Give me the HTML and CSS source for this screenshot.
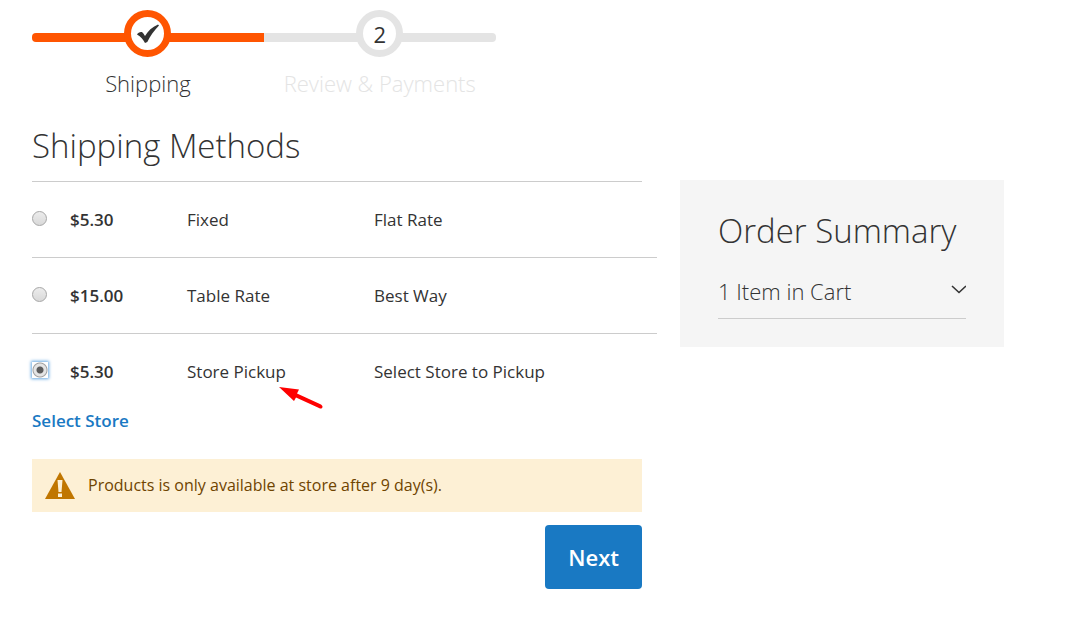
FILE: index.html
```html
<!DOCTYPE html>
<html lang="en">
<head>
    <meta charset="UTF-8">
    <meta name="viewport" content="width=device-width, initial-scale=1.0">
    <title>Checkout</title>
    <link rel="stylesheet" href="styles.css">
</head>
<body>
    <div class="checkout">
        <main class="opc-wrapper">
            <ol class="progress">
                <li class="step active">
                    <span class="step-icon">
                        <svg width="24" height="22" viewBox="0 0 24 22" aria-hidden="true">
                            <path d="M1 11.500 C2 9.500 5 8.500 6.500 9.500 C7.500 10.300 8 11.500 9 13 C12 8 16 4 22 1.500 L23 2.500 C18 7.500 14 13.500 11.300 19 L9 20 C7 16.500 5 13.500 1 11.500 Z"/>
                        </svg>
                    </span>
                    <span class="step-label">Shipping</span>
                </li>
                <li class="step">
                    <span class="step-icon">2</span>
                    <span class="step-label">Review &amp; Payments</span>
                </li>
            </ol>

            <h1 class="title">Shipping Methods</h1>

            <form class="methods-form">
                <table class="methods">
                    <tbody>
                        <tr>
                            <td class="col-radio"><input type="radio" name="method" id="method_flat" class="radio"></td>
                            <td class="col-price">$5.30</td>
                            <td class="col-method"><label for="method_flat">Fixed</label></td>
                            <td>Flat Rate</td>
                        </tr>
                        <tr>
                            <td class="col-radio"><input type="radio" name="method" id="method_table" class="radio"></td>
                            <td class="col-price">$15.00</td>
                            <td class="col-method"><label for="method_table">Table Rate</label></td>
                            <td>Best Way</td>
                        </tr>
                        <tr>
                            <td class="col-radio"><input type="radio" name="method" id="method_pickup" class="radio" checked></td>
                            <td class="col-price">$5.30</td>
                            <td class="col-method">
                                <label for="method_pickup" class="pointed">Store Pickup<svg class="arrow" width="46" height="26" viewBox="0 0 46 26" aria-hidden="true">
                                    <path d="M1 2 L21 4.500 L19 8.500 L43 19.500 Q45.500 21.500 44 23 Q43 24 41 23 L18 12.500 L16 16 Z"/>
                                </svg></label>
                            </td>
                            <td>Select Store to Pickup</td>
                        </tr>
                    </tbody>
                </table>

                <a href="#" class="select-store">Select Store</a>

                <div class="message">
                    <svg class="warning" width="30" height="27" viewBox="0 0 30 27" aria-hidden="true">
                        <path class="warning-shape" d="M15 0 L30 27 H0 Z"/>
                        <path class="warning-mark" d="M12.500 8 H17.500 L16.500 20 H13.500 Z M13 21.500 H17 V25 H13 Z"/>
                    </svg>
                    <span>Products is only available at store after 9 day(s).</span>
                </div>

                <div class="actions">
                    <button type="submit" class="next">Next</button>
                </div>
            </form>
        </main>

        <aside class="summary">
            <h2 class="summary-title">Order Summary</h2>
            <button type="button" class="cart-toggle">
                <span>1 Item in Cart</span>
                <svg width="16" height="14" viewBox="0 0 16 14" aria-hidden="true">
                    <path d="M2 2 L9 8.500 L16 2"/>
                </svg>
            </button>
        </aside>
    </div>
</body>
</html>
```
FILE: styles.css
```css
* {
    box-sizing: border-box;
}
body {
    margin: 0;
    background: #fff;
    color: #333;
    font-family: "Open Sans", "Noto Sans", sans-serif;
    font-size: 17px;
    line-height: 26px;
}
.checkout {
    display: grid;
    grid-template-columns: 610fr 324fr;
    column-gap: 38px;
    align-items: start;
    padding: 10px 68px 0 32px;
}

/* progress bar */
.progress {
    display: flex;
    width: 76%;
    margin: 0 0 28px;
    padding: 0;
    list-style: none;
}
.step {
    position: relative;
    flex: 1;
    display: flex;
    flex-direction: column;
    align-items: center;
    color: #e4e4e4;
}
.step::before {
    content: "";
    position: absolute;
    top: 23px;
    left: 0;
    right: 0;
    height: 9px;
    background: #e4e4e4;
}
.step:first-child::before {
    border-radius: 4px 0 0 4px;
}
.step:last-child::before {
    border-radius: 0 4px 4px 0;
}
.step-icon {
    position: relative;
    display: flex;
    align-items: center;
    justify-content: center;
    width: 47px;
    height: 47px;
    border: 7px solid #e4e4e4;
    border-radius: 50%;
    background: #fff;
    color: #333;
    font-size: 22px;
    font-weight: 500;
}
.step-icon svg {
    fill: #333;
}
.step-label {
    margin-top: 10px;
    font-size: 22px;
    font-weight: 300;
    line-height: 32px;
    white-space: nowrap;
}
.step.active {
    color: #333;
}
.step.active::before {
    background: #ff5501;
}
.step.active .step-icon {
    border-color: #ff5501;
}

/* shipping methods */
.title {
    margin: 0;
    padding-bottom: 16px;
    border-bottom: 1px solid #ccc;
    font-size: 33px;
    font-weight: 300;
    line-height: 38px;
}
.methods {
    width: calc(100% + 15px);
    border-spacing: 0;
    table-layout: fixed;
}
.methods td {
    height: 75px;
    padding: 0;
    vertical-align: middle;
}
.methods tr + tr td {
    height: 76px;
    border-top: 1px solid #ccc;
}
.methods .col-radio {
    width: 38px;
    padding-bottom: 3px;
    line-height: 0;
}
.methods .col-price {
    width: 117px;
    font-weight: 600;
}
.methods .col-method {
    width: 187px;
}
.radio {
    appearance: none;
    width: 15px;
    height: 15px;
    margin: 0;
    border: 1px solid #a6a6a6;
    border-radius: 50%;
    background: linear-gradient(#ececec, #d9d9d9);
}
.radio:checked {
    width: 16px;
    height: 16px;
    border: 0;
    border-radius: 0;
    background: radial-gradient(circle at 8px 8px, #5c5c5c 3px, #e4e4e4 4px, #e4e4e4 6px, #a0a0a0 7px, #fff 8px);
    box-shadow: 0 0 3px 1px #68a8e0;
}
.pointed {
    position: relative;
}
.arrow {
    position: absolute;
    top: 25px;
    right: -38px;
    fill: #fe0000;
}
.select-store {
    display: block;
    width: fit-content;
    line-height: 24px;
    color: #1979c3;
    font-weight: 600;
    text-decoration: none;
}
.message {
    display: flex;
    align-items: flex-start;
    gap: 13px;
    margin-top: 26px;
    padding: 13px;
    background: #fdf0d5;
    color: #6f4400;
    font-size: 16px;
}
.warning-shape {
    fill: #c07600;
}
.warning-mark {
    fill: #fdf0d5;
}
.actions {
    display: flex;
    justify-content: flex-end;
    margin-top: 13px;
}
.next {
    padding: 16px 23px;
    border: 0;
    border-radius: 4px;
    background: #1979c3;
    color: #fff;
    font-family: inherit;
    font-size: 22px;
    font-weight: 600;
    line-height: 32px;
}

/* order summary */
.summary {
    margin-top: 170px;
    padding: 28px 38px;
    background: #f5f5f5;
}
.summary-title {
    margin: 0;
    font-size: 33px;
    font-weight: 300;
    line-height: 46px;
}
.cart-toggle {
    display: flex;
    align-items: center;
    justify-content: space-between;
    width: 100%;
    padding: 20px 0 10px;
    border: 0;
    border-bottom: 1px solid #ccc;
    background: none;
    color: #333;
    font-family: inherit;
    font-size: 22px;
    font-weight: 300;
    line-height: 34px;
}
.cart-toggle svg {
    fill: none;
    stroke: #333;
    stroke-width: 1.6;
}
```
